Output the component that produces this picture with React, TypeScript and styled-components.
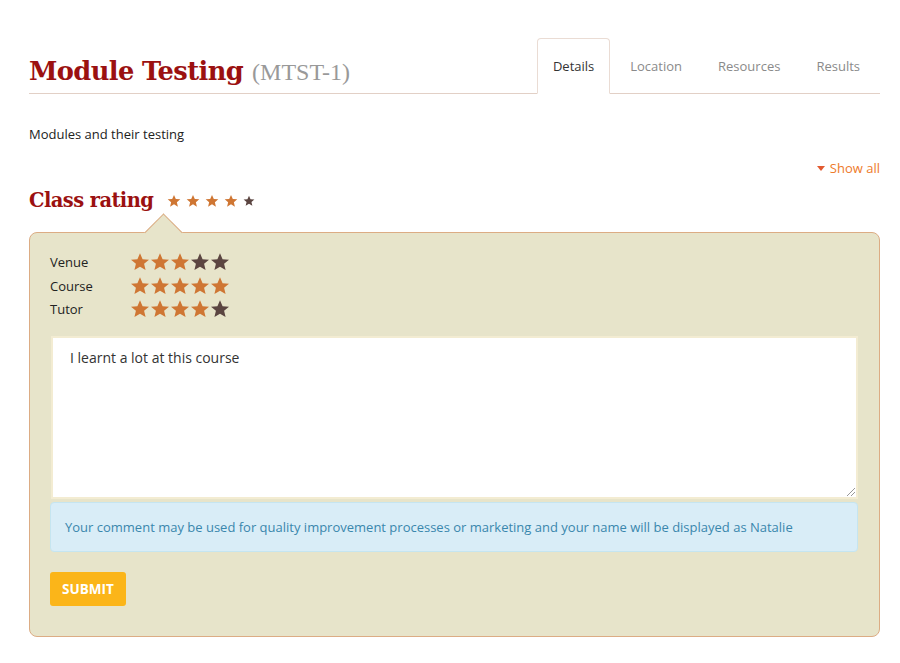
import React from "react";
import styled, { createGlobalStyle } from "styled-components";

const Global = createGlobalStyle`
  html, body { margin: 0; padding: 0; background: #fff; }
  body { font-family: "Open Sans", "DejaVu Sans", sans-serif; color: #222; }
`;

const Page = styled.div`
  padding: 38px 20px 0 29px;
  width: 851px;
`;

const Header = styled.div`
  display: flex;
  align-items: flex-end;
  justify-content: space-between;
  border-bottom: 1px solid #e2d0c6;
  height: 55px;
`;

const Title = styled.h1`
  margin: 0 0 4px 0;
  font-family: "DejaVu Serif", serif;
  font-weight: bold;
  font-size: 25.7px;
  letter-spacing: -0.6px;
  color: #9b1111;
  line-height: 34px;
`;

const Code = styled.span`
  font-family: "Liberation Serif", serif;
  font-weight: normal;
  font-size: 24px;
  letter-spacing: 0;
  color: #999;
  margin-left: 9px;
`;

const Tabs = styled.div`
  display: flex;
  align-items: flex-end;
  margin-bottom: -1px;
  margin-right: 4px;
`;

const Tab = styled.div<{ $active?: boolean }>`
  height: 56px;
  box-sizing: border-box;
  padding: 0 15px 1px;
  display: flex;
  align-items: center;
  font-size: 13px;
  color: ${(p) => (p.$active ? "#333" : "#8a8a8a")};
  background: ${(p) => (p.$active ? "#fff" : "transparent")};
  border: 1px solid ${(p) => (p.$active ? "#eadcd4" : "transparent")};
  border-bottom: 1px solid ${(p) => (p.$active ? "#fff" : "transparent")};
  border-radius: 4px 4px 0 0;
  margin-left: 4px;
`;

const Desc = styled.p`
  margin: 31px 0 0 0;
  font-size: 13px;
  line-height: 18px;
  color: #222;
`;

const ShowAllRow = styled.div`
  display: flex;
  justify-content: flex-end;
  margin-top: 16px;
`;

const ShowAll = styled.a`
  color: #ee7a2a;
  font-size: 13px;
  line-height: 18px;
  display: flex;
  align-items: center;
  gap: 5px;
`;

const Caret = styled.span`
  width: 0;
  height: 0;
  border-left: 4px solid transparent;
  border-right: 4px solid transparent;
  border-top: 5px solid #e25a30;
`;

const RatingHeader = styled.div`
  display: flex;
  align-items: center;
  gap: 14px;
  margin-top: 9px;
`;

const SubTitle = styled.h2`
  margin: 0;
  font-family: "DejaVu Serif", serif;
  font-weight: bold;
  font-size: 19.5px;
  letter-spacing: -0.6px;
  color: #9b1111;
  line-height: 30px;
`;

const Stars = styled.div<{ $gap: number }>`
  display: flex;
  gap: ${(p) => p.$gap}px;
  align-items: center;
`;

const Panel = styled.div`
  position: relative;
  margin-top: 16px;
  background: #e7e4ca;
  border: 1px solid #dcac84;
  border-radius: 8px;
  padding: 19px 21px 30px 20px;
`;

const Notch = styled.div`
  position: absolute;
  top: -14px;
  left: 120px;
  width: 26px;
  height: 26px;
  background: #e7e4ca;
  border-top: 1px solid #dcac84;
  border-left: 1px solid #dcac84;
  transform: rotate(45deg);
`;

const RatingGrid = styled.div`
  display: grid;
  grid-template-columns: 80px auto;
  row-gap: 3.5px;
  align-items: center;
  justify-content: start;
`;

const Label = styled.div`
  font-size: 13px;
  line-height: 20px;
  color: #222;
`;

const TextArea = styled.div`
  position: relative;
  margin: 17px 0 0 1px;
  height: 163px;
  box-sizing: border-box;
  background: #fff;
  border: 2px solid #f3ecd2;
  padding: 10px 17px;
  font-size: 14px;
  color: #333;
  line-height: 20px;
`;

const Grip = styled.svg`
  position: absolute;
  right: 0;
  bottom: 0;
`;

const Info = styled.div`
  margin-top: 3px;
  background: #d9edf7;
  border: 1px solid #c5e5f0;
  border-radius: 4px;
  padding: 14px 14px;
  font-size: 13px;
  line-height: 20px;
  color: #3a87ad;
`;

const Submit = styled.button`
  margin-top: 20px;
  background: #fbb519;
  border: none;
  border-radius: 3px;
  color: #fff;
  font-family: "Open Sans", sans-serif;
  font-weight: bold;
  font-size: 13.5px;
  padding: 0 12px;
  height: 34px;
  text-transform: uppercase;
`;

const ORANGE = "#cf7633";
const DARK = "#5b4541";

function Star({ size, color }: { size: number; color: string }) {
  return (
    <svg width={size} height={size} viewBox="0 0 24 24">
      <path
        d="M12 1.5l3.1 7.1 7.7.6-5.9 5 1.8 7.5L12 17.7l-6.7 4 1.8-7.5-5.9-5 7.7-.6z"
        fill={color}
      />
    </svg>
  );
}

function StarRow({ value, size, gap }: { value: number; size: number; gap: number }) {
  return (
    <Stars $gap={gap}>
      {[1, 2, 3, 4, 5].map((i) => (
        <Star key={i} size={i === 5 && size < 16 && value < 5 ? size - 2 : size} color={i <= value ? ORANGE : DARK} />
      ))}
    </Stars>
  );
}

export default function App() {
  return (
    <>
      <Global />
      <Page>
        <Header>
          <Title>
            Module Testing<Code>(MTST-1)</Code>
          </Title>
          <Tabs>
            <Tab $active>Details</Tab>
            <Tab>Location</Tab>
            <Tab>Resources</Tab>
            <Tab>Results</Tab>
          </Tabs>
        </Header>
        <Desc>Modules and their testing</Desc>
        <ShowAllRow>
          <ShowAll>
            <Caret />
            Show all
          </ShowAll>
        </ShowAllRow>
        <RatingHeader>
          <SubTitle>Class rating</SubTitle>
          <StarRow value={4} size={14} gap={5} />
        </RatingHeader>
        <Panel>
          <Notch />
          <RatingGrid>
            <Label>Venue</Label>
            <StarRow value={3} size={20} gap={0} />
            <Label>Course</Label>
            <StarRow value={5} size={20} gap={0} />
            <Label>Tutor</Label>
            <StarRow value={4} size={20} gap={0} />
          </RatingGrid>
          <TextArea>
            I learnt a lot at this course
            <Grip width="12" height="12" viewBox="0 0 12 12">
              <path d="M11 3L3 11M11 7L7 11" stroke="#999" strokeWidth="1" />
            </Grip>
          </TextArea>
          <Info>
            Your comment may be used for quality improvement processes or marketing and your name will be displayed as Natalie
          </Info>
          <Submit>Submit</Submit>
        </Panel>
      </Page>
    </>
  );
}
